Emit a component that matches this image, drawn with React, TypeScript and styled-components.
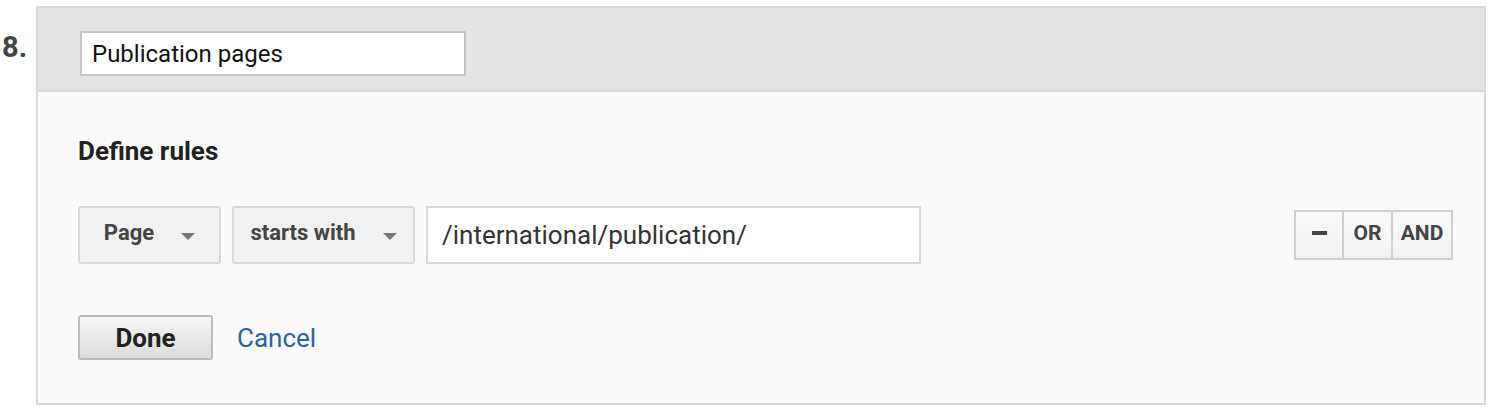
import React from 'react';
import styled, { createGlobalStyle } from 'styled-components';

const GlobalStyle = createGlobalStyle`
  body {
    margin: 0;
    background: #fff;
    font-family: Roboto, 'Liberation Sans', Arial, sans-serif;
  }
`;

type RuleDropdownProps = {
  label: string;
  width: number;
};

function RuleDropdown({ label, width }: RuleDropdownProps): JSX.Element {
  return (
    <Dropdown $width={width}>
      <DropdownLabel>{label}</DropdownLabel>
      <Caret />
    </Dropdown>
  );
}

export default function App(): JSX.Element {
  return (
    <>
      <GlobalStyle />
      <Page>
        <StepNumber>8.</StepNumber>

        <Panel>
          <Header>
            <TitleInput defaultValue="Publication pages" />
          </Header>

          <Body>
            <Heading>Define rules</Heading>

            <RuleRow>
              <RuleDropdown label="Page" width={143} />
              <RuleDropdown label="starts with" width={183} />
              <ValueInput defaultValue="/international/publication/" />

              <Spacer />

              <ButtonGroup>
                <GroupButton $width={46}>
                  <Minus />
                </GroupButton>
                <GroupButton $width={49}>OR</GroupButton>
                <GroupButton $width={60}>AND</GroupButton>
              </ButtonGroup>
            </RuleRow>

            <Actions>
              <DoneButton>Done</DoneButton>
              <CancelLink href="#">Cancel</CancelLink>
            </Actions>
          </Body>
        </Panel>
      </Page>
    </>
  );
}

const Page = styled.div`
  display: flex;
  align-items: flex-start;
  padding-top: 6px;
  width: 1492px;
  height: 414px;
  box-sizing: border-box;
`;

const StepNumber = styled.div`
  width: 36px;
  padding-left: 2px;
  box-sizing: border-box;
  margin-top: 24px;
  color: #444;
  font-size: 29px;
  font-weight: bold;
  line-height: 34px;
`;

const Panel = styled.div`
  width: 1450px;
  border: 2px solid #d8d8d8;
  box-sizing: border-box;
  background: #fafafa;
`;

const Header = styled.div`
  background: #e3e3e3;
  border-bottom: 2px solid #d8d8d8;
  padding: 23px 0 14px 42px;
`;

const TitleInput = styled.input`
  display: block;
  width: 386px;
  height: 45px;
  box-sizing: border-box;
  border: 2px solid #c4c4c4;
  background: #fff;
  padding: 0 0 0 10px;
  color: #111;
  font-family: inherit;
  font-size: 24px;
  outline: none;
`;

const Body = styled.div`
  padding: 42px 31px 43px 40px;
`;

const Heading = styled.h3`
  margin: 0 0 38px;
  color: #222;
  font-size: 26px;
  font-weight: bold;
  line-height: 34px;
`;

const RuleRow = styled.div`
  display: flex;
  align-items: center;
  gap: 11px;
`;

const Dropdown = styled.div<{ $width: number }>`
  display: flex;
  flex-shrink: 0;
  align-items: center;
  justify-content: center;
  gap: 27px;
  width: ${(p) => p.$width}px;
  height: 58px;
  box-sizing: border-box;
  border: 2px solid #d8d8d8;
  border-radius: 3px;
  background: #f1f1f1;
  cursor: pointer;
`;

const DropdownLabel = styled.span`
  color: #444;
  font-size: 22px;
  font-weight: bold;
  margin-top: -6px;
`;

const Caret = styled.span`
  flex-shrink: 0;
  margin-top: 2px;
  width: 0;
  height: 0;
  border-left: 7px solid transparent;
  border-right: 7px solid transparent;
  border-top: 7px solid #777;
`;

const ValueInput = styled.input`
  flex-shrink: 0;
  width: 495px;
  height: 58px;
  box-sizing: border-box;
  border: 2px solid #d8d8d8;
  background: #fff;
  padding: 0 0 0 14px;
  color: #333;
  font-family: inherit;
  font-size: 26px;
  outline: none;
`;

const Spacer = styled.div`
  flex: 1;
`;

const ButtonGroup = styled.div`
  display: flex;
  flex-shrink: 0;
  border: 2px solid #cfcfcf;
  height: 50px;
  box-sizing: border-box;
`;

const GroupButton = styled.div<{ $width: number }>`
  display: flex;
  align-items: center;
  justify-content: center;
  flex: 0 0 ${(p) => p.$width}px;
  box-sizing: border-box;
  padding-bottom: 4px;
  background: linear-gradient(#fafafa, #f1f1f1);
  color: #444;
  font-size: 21px;
  font-weight: bold;

  &:not(:first-child) {
    border-left: 2px solid #cfcfcf;
  }
`;

const Minus = styled.span`
  display: block;
  width: 15px;
  height: 4px;
  background: #444;
`;

const Actions = styled.div`
  display: flex;
  align-items: center;
  gap: 24px;
  margin-top: 51px;
`;

const DoneButton = styled.button`
  width: 135px;
  height: 45px;
  border: 2px solid #bcbcbc;
  border-radius: 3px;
  background: linear-gradient(#f6f6f6, #dcdcdc);
  color: #222;
  font-family: inherit;
  font-size: 26px;
  font-weight: bold;
  cursor: pointer;
`;

const CancelLink = styled.a`
  color: #2b63a3;
  font-size: 26px;
  text-decoration: none;
`;
